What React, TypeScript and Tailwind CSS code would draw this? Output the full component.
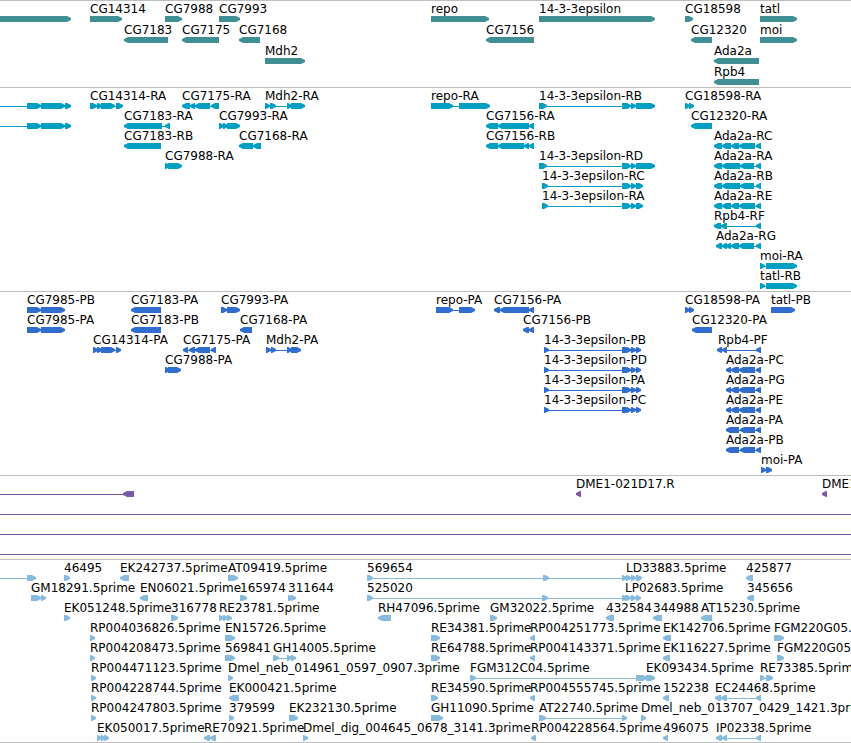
import clsx from "clsx";

type Block = [number, number];

interface Feature {
  name: string;
  strand: 1 | -1;
  blocks: Block[];
  // introns running past the visible window or into a neighbour
  line?: Block;
}

interface TrackData {
  id: string;
  color: string;
  tall?: boolean;
  rows: Feature[][];
}

const fwd = (name: string, blocks: Block[], line?: Block): Feature => ({ name, strand: 1, blocks, line });
const rev = (name: string, blocks: Block[], line?: Block): Feature => ({ name, strand: -1, blocks, line });

const epsilonLong: Block[] = [[539, 547], [622, 631], [631, 636], [636, 655]];
const epsilonShort: Block[] = [[542, 548], [622, 631], [631, 636], [636, 643]];
const epsilonCds: Block[] = [[544, 549], [622, 631], [631, 636], [636, 641]];
const adaSplit: Block[] = [[714, 722], [722, 731], [731, 739], [739, 755], [756, 761]];
const adaJoined: Block[] = [[714, 722], [722, 740], [740, 754], [756, 761]];
const adaCdsSplit: Block[] = [[726, 731], [731, 739], [739, 755], [756, 761]];
const adaCdsJoined: Block[] = [[726, 739], [740, 755], [756, 761]];

const tracks: TrackData[] = [
  {
    id: "Genes",
    color: "text-[#3f8f95]",
    tall: true,
    rows: [
      [
        fwd("", [[0, 71]]),
        fwd("CG14314", [[90, 122]]),
        fwd("CG7988", [[165, 182]]),
        fwd("CG7993", [[219, 240]]),
        fwd("repo", [[431, 489]]),
        fwd("14-3-3epsilon", [[539, 655]]),
        fwd("CG18598", [[685, 693]]),
        fwd("tatl", [[760, 797]]),
      ],
      [
        rev("CG7183", [[124, 168]]),
        rev("CG7175", [[182, 219]]),
        rev("CG7168", [[239, 260]]),
        rev("CG7156", [[486, 534]]),
        rev("CG12320", [[691, 712]]),
        fwd("moi", [[760, 797]]),
      ],
      [fwd("Mdh2", [[265, 305]]), rev("Ada2a", [[714, 759]])],
      [rev("Rpb4", [[714, 759]])],
    ],
  },
  {
    id: "Transcripts",
    color: "text-[#009fc1]",
    rows: [
      [
        fwd("", [[27, 41], [41, 65], [65, 71]], [0, 27]),
        fwd("CG14314-RA", [[90, 97], [97, 101], [101, 115], [116, 123]]),
        rev("CG7175-RA", [[182, 190], [190, 195], [195, 210], [211, 219]]),
        fwd("Mdh2-RA", [[265, 270], [270, 276], [287, 291], [291, 305]]),
        fwd("repo-RA", [[431, 453], [459, 490]]),
        fwd("14-3-3epsilon-RB", epsilonLong),
        fwd("CG18598-RA", [[685, 689], [689, 694]]),
      ],
      [
        fwd("", [[27, 41], [41, 65], [65, 71]], [0, 27]),
        rev("CG7183-RA", [[124, 162], [165, 170]]),
        fwd("CG7993-RA", [[219, 223], [223, 227], [227, 240]]),
        rev("CG7156-RA", [[486, 498], [498, 529], [529, 534]]),
        rev("CG12320-RA", [[691, 712]]),
      ],
      [
        rev("CG7183-RB", [[124, 161]]),
        rev("CG7168-RA", [[239, 253], [253, 261]]),
        rev("CG7156-RB", [[486, 498], [498, 524], [524, 529], [529, 534]]),
        rev("Ada2a-RC", adaSplit),
      ],
      [
        fwd("CG7988-RA", [[165, 168], [168, 182]]),
        fwd("14-3-3epsilon-RD", epsilonLong),
        rev("Ada2a-RA", adaJoined),
      ],
      [fwd("14-3-3epsilon-RC", epsilonShort), rev("Ada2a-RB", adaJoined)],
      [fwd("14-3-3epsilon-RA", epsilonShort), rev("Ada2a-RE", adaSplit)],
      [rev("Rpb4-RF", [[714, 721], [721, 727], [756, 761]])],
      [rev("Ada2a-RG", [[716, 722], [722, 727], [727, 731], [731, 739], [739, 754], [756, 761]])],
      [fwd("moi-RA", [[760, 765], [766, 797]])],
      [fwd("tatl-RB", [[760, 765], [766, 797]])],
    ],
  },
  {
    id: "Coding sequences",
    color: "text-[#306dcf]",
    rows: [
      [
        fwd("CG7985-PB", [[27, 41], [41, 65]]),
        rev("CG7183-PA", [[131, 161]]),
        fwd("CG7993-PA", [[221, 227], [227, 240]]),
        fwd("repo-PA", [[436, 453], [459, 475]]),
        rev("CG7156-PA", [[494, 500], [500, 529], [529, 534]]),
        fwd("CG18598-PA", [[685, 689], [689, 694]]),
        fwd("tatl-PB", [[771, 795]]),
      ],
      [
        fwd("CG7985-PA", [[27, 41], [41, 65]]),
        rev("CG7183-PB", [[131, 161]]),
        rev("CG7168-PA", [[240, 252]]),
        rev("CG7156-PB", [[523, 529], [529, 534]]),
        rev("CG12320-PA", [[692, 712]]),
      ],
      [
        fwd("CG14314-PA", [[93, 97], [97, 101], [101, 115], [116, 121]]),
        rev("CG7175-PA", [[183, 188], [189, 195], [195, 210], [211, 216]]),
        fwd("Mdh2-PA", [[266, 271], [271, 276], [287, 291], [291, 301]]),
        fwd("14-3-3epsilon-PB", epsilonCds),
        rev("Rpb4-PF", [[718, 722], [722, 727], [756, 761]]),
      ],
      [
        fwd("CG7988-PA", [[165, 168], [168, 181]]),
        fwd("14-3-3epsilon-PD", epsilonCds),
        rev("Ada2a-PC", adaCdsSplit),
      ],
      [fwd("14-3-3epsilon-PA", epsilonCds), rev("Ada2a-PG", adaCdsSplit)],
      [fwd("14-3-3epsilon-PC", epsilonCds), rev("Ada2a-PE", adaCdsSplit)],
      [rev("Ada2a-PA", adaCdsJoined)],
      [rev("Ada2a-PB", adaCdsJoined)],
      [fwd("moi-PA", [[761, 766], [766, 772]])],
    ],
  },
  {
    id: "BAC ends",
    color: "text-[#7759a8]",
    rows: [
      [
        rev("", [[123, 134]], [0, 123]),
        rev("DME1-021D17.R", [[576, 581]]),
        rev("DME1", [[822, 827]]),
      ],
      [],
      [],
      [],
    ],
  },
  {
    id: "ESTs",
    color: "text-[#86bbdd]",
    rows: [
      [
        fwd("", [[27, 36]], [0, 27]),
        fwd("46495", [[64, 70]]),
        rev("EK242737.5prime", [[120, 129]]),
        fwd("AT09419.5prime", [[228, 238]]),
        fwd("569654", [[367, 373], [543, 549], [622, 627]]),
        fwd("LD33883.5prime", [[626, 631], [631, 636], [636, 642]]),
        rev("425877", [[746, 753]]),
      ],
      [
        fwd("GM18291.5prime", [[31, 41], [41, 46]]),
        rev("EN06021.5prime", [[140, 148]]),
        fwd("165974", [[240, 247]]),
        fwd("311644", [[288, 292], [291, 296]]),
        fwd("525020", [[367, 373], [542, 548], [622, 627]]),
        fwd("LP02683.5prime", [[625, 631], [631, 636], [636, 641]]),
        rev("345656", [[747, 754]]),
      ],
      [
        fwd("EK051248.5prime", [[64, 70]]),
        fwd("316778", [[171, 178]]),
        fwd("RE23781.5prime", [[219, 223], [223, 227], [227, 232]]),
        rev("RH47096.5prime", [[378, 391]]),
        fwd("GM32022.5prime", [[490, 497]]),
        rev("432584", [[606, 614]]),
        rev("344988", [[653, 662]]),
        rev("AT15230.5prime", [[701, 712]]),
      ],
      [
        fwd("RP004036826.5prime", [[90, 95]]),
        fwd("EN15726.5prime", [[225, 235]]),
        fwd("RE34381.5prime", [[431, 440]]),
        rev("RP004251773.5prime", [[530, 535]]),
        rev("EK142706.5prime", [[663, 671]]),
        fwd("FGM220G05.5prime", [[774, 784]]),
      ],
      [
        fwd("RP004208473.5prime", [[90, 95]]),
        fwd("569841", [[225, 235]]),
        fwd("GH14005.5prime", [[273, 279], [287, 291], [291, 296]]),
        fwd("RE64788.5prime", [[431, 440]]),
        rev("RP004143371.5prime", [[530, 535]]),
        rev("EK116227.5prime", [[663, 670]]),
        fwd("FGM220G05", [[777, 784]]),
      ],
      [
        fwd("RP004471123.5prime", [[91, 96]]),
        fwd("Dmel_neb_014961_0597_0907.3prime", [[228, 233]]),
        fwd("FGM312C04.5prime", [[470, 476], [636, 647]]),
        fwd("EK093434.5prime", [[646, 655]]),
        fwd("RE73385.5prime", [[760, 765], [766, 773]]),
      ],
      [
        fwd("RP004228744.5prime", [[91, 96]]),
        rev("EK000421.5prime", [[229, 239]]),
        fwd("RE34590.5prime", [[431, 438]]),
        rev("RP004555745.5prime", [[530, 535]]),
        rev("152238", [[663, 669]]),
        rev("EC24468.5prime", [[715, 721], [721, 727], [756, 761]]),
      ],
      [
        fwd("RP004247803.5prime", [[91, 96]]),
        fwd("379599", [[229, 234]]),
        fwd("EK232130.5prime", [[289, 298]]),
        fwd("GH11090.5prime", [[431, 443]]),
        fwd("AT22740.5prime", [[539, 546], [622, 627]]),
        fwd("Dmel_neb_013707_0429_1421.3prime", [[641, 646]]),
      ],
      [
        fwd("EK050017.5prime", [[97, 101], [101, 104], [104, 109]]),
        rev("RE70921.5prime", [[204, 210], [210, 216]]),
        fwd("Dmel_dig_004645_0678_3141.3prime", [[303, 308]]),
        rev("RP004228564.5prime", [[531, 536]]),
        rev("496075", [[663, 668]]),
        rev("IP02338.5prime", [[716, 722], [722, 727], [756, 761]]),
      ],
    ],
  },
];

// short exons still get a full arrow head, so they may overlap the next one
const arrow = (from: number, to: number, strand: 1 | -1) => {
  const width = Math.max(5, to - from);
  const tail = strand === 1 ? from : to;
  const tip = tail + strand * width;
  const neck = tip - strand * 5;
  return `${tail},0 ${neck},0 ${neck + strand},0 ${tip},2 ${tip},4 ${neck + strand},6 ${neck},6 ${tail},6`;
};

const FeatureGlyph = ({ feature, tall }: { feature: Feature; tall?: boolean }) => {
  const { name, strand, blocks, line } = feature;
  const start = line ? line[0] : blocks[0][0];
  const end = blocks[blocks.length - 1][1];
  return (
    <div className="absolute top-0 flex flex-col" style={{ left: start }}>
      <span className={clsx("whitespace-nowrap text-black", tall ? "h-[15px] leading-[16px]" : "h-[14px] leading-[14px]")}>
        {name}
      </span>
      <svg
        width={end - start}
        height={6}
        viewBox={`${start} 0 ${end - start} 6`}
        fill="currentColor"
        className="block overflow-visible"
      >
        <rect x={start} y={3} width={end - start - 2} height={1} />
        {blocks.map(([from, to], index) => (
          <polygon key={index} points={arrow(from, to, strand)} />
        ))}
      </svg>
    </div>
  );
};

const Track = ({ track, first, last }: { track: TrackData; first: boolean; last: boolean }) => (
  <section
    aria-label={track.id}
    className={clsx("border-b border-[#bebebe]", !first && "pt-px", last ? "pb-px" : "pb-0.5", track.color)}
  >
    {track.rows.map((row, index) => (
      <div key={index} className={clsx("relative", track.tall ? "h-[21px]" : "h-5", row.length === 0 && "flex items-end pb-0.5")}>
        {/* an empty row is a clone spanning the whole window */}
        {row.length === 0 && <div className="h-px w-full bg-[#7759a8]" />}
        {row.map((feature, i) => (
          <FeatureGlyph key={i} feature={feature} tall={track.tall} />
        ))}
      </div>
    ))}
  </section>
);

const App = () => {
  return (
    <main className="w-full overflow-hidden border-t border-[#bebebe] bg-white font-['DejaVu_Sans',sans-serif] text-[12px]">
      {tracks.map((track, index) => (
        <Track key={track.id} track={track} first={index === 0} last={index === tracks.length - 1} />
      ))}
    </main>
  );
};

export default App;
